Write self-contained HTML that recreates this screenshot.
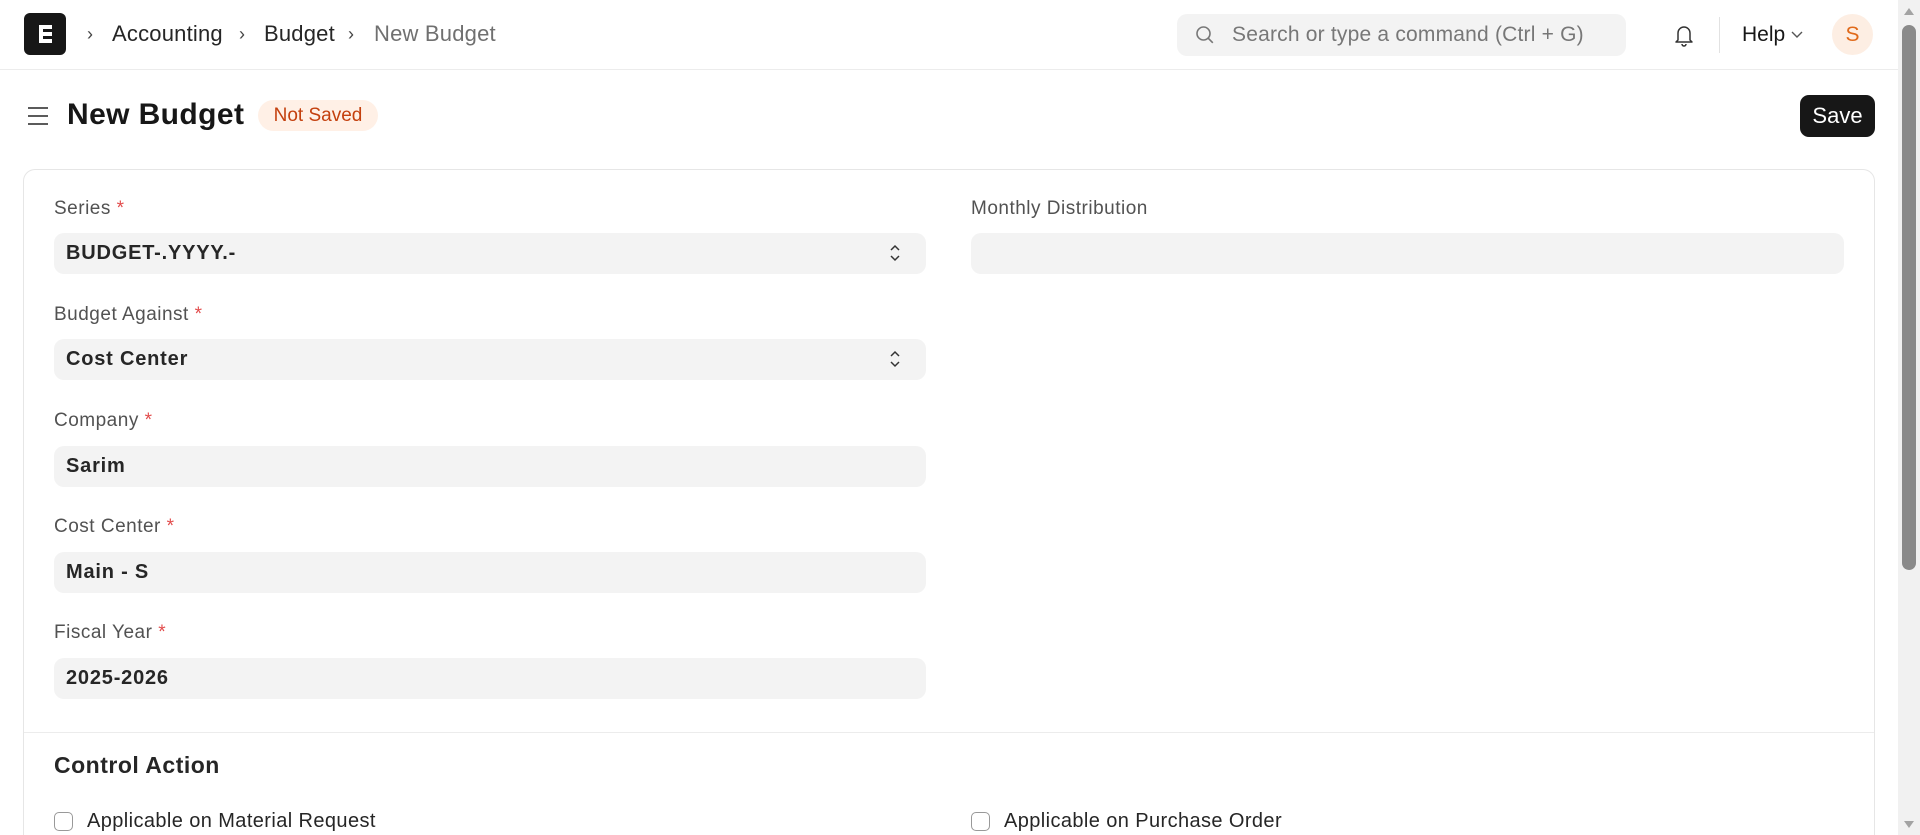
<!DOCTYPE html>
<html style="overflow:hidden;height:835px"><head><meta charset="utf-8"><style>
*{box-sizing:border-box;margin:0;padding:0}
body{width:1920px;height:835px;overflow:hidden;background:#fff;font-family:"Liberation Sans",sans-serif;color:#171717;position:relative}
.a{position:absolute;white-space:nowrap}
.nav{position:absolute;left:0;top:0;width:1898px;height:70px;border-bottom:1px solid #ececec;background:#fff}
.crumb{font-size:22px;color:#262626;top:21px;letter-spacing:0.2px}
.chev{font-size:18px;color:#444;top:24px}
.lbl{font-size:19px;color:#525252;letter-spacing:0.5px}
.req{color:#e24c4c}
.inp{position:absolute;height:41px;background:#f3f3f3;border-radius:10px;font-size:20px;letter-spacing:0.8px;font-weight:bold;padding-left:12px;line-height:41px;color:#262626}
.cb{position:absolute;width:19px;height:19px;border:1.5px solid #999;border-radius:5px;background:#fff}
</style></head><body>
<div class="nav"></div>
<div class="a" style="left:24px;top:13px;width:42px;height:42px;background:#171717;border-radius:6px"></div>
<svg class="a" style="left:24px;top:13px" width="42" height="42" viewBox="0 0 42 42"><path d="M15 12h13v4H19v3h9v4h-9v3h9v4H15z" fill="#fff"/></svg>
<div class="a chev" style="left:87px">&#8250;</div>
<div class="a crumb" style="left:112px">Accounting</div>
<div class="a chev" style="left:239px">&#8250;</div>
<div class="a crumb" style="left:264px">Budget</div>
<div class="a chev" style="left:348px">&#8250;</div>
<div class="a crumb" style="left:374px;color:#707070">New Budget</div>
<div class="a" style="left:1177px;top:14px;width:449px;height:42px;background:#f3f3f3;border-radius:10px"></div>
<svg class="a" style="left:1195px;top:25px" width="20" height="20" viewBox="0 0 20 20"><circle cx="8.5" cy="8.5" r="6.5" fill="none" stroke="#777" stroke-width="1.6"/><path d="M13.3 13.3l4.5 4.5" stroke="#777" stroke-width="1.6"/></svg>
<div class="a" style="left:1232px;top:23px;font-size:21px;color:#777;letter-spacing:0.2px">Search or type a command (Ctrl + G)</div>
<svg class="a" style="left:1672px;top:22px" width="24" height="26" viewBox="0 0 24 26"><path d="M6 18V11a6 6 0 0 1 12 0v7l2 2H4z" fill="none" stroke="#333" stroke-width="1.5" stroke-linejoin="round"/><path d="M10 22a2 2 0 0 0 4 0" fill="none" stroke="#333" stroke-width="1.5"/></svg>
<div class="a" style="left:1719px;top:17px;width:1px;height:36px;background:#e2e2e2"></div>
<div class="a" style="left:1742px;top:23px;font-size:21px;color:#171717">Help</div>
<svg class="a" style="left:1791px;top:31px" width="12" height="8" viewBox="0 0 12 8"><path d="M1 1l5 5 5-5" fill="none" stroke="#555" stroke-width="1.4"/></svg>
<div class="a" style="left:1832px;top:14px;width:41px;height:41px;border-radius:50%;background:#fdeee3;color:#e06a1b;font-size:21px;text-align:center;line-height:41px">S</div>
<div class="a" style="left:1898px;top:0;width:22px;height:835px;background:#f1f1f1"></div>
<div class="a" style="left:1902px;top:25px;width:14px;height:545px;background:#8a8a8a;border-radius:7px"></div>
<svg class="a" style="left:1903px;top:6px" width="12" height="10"><path d="M1 9L6 2l5 7z" fill="#a3a3a3"/></svg>
<svg class="a" style="left:1903px;top:820px" width="12" height="10"><path d="M1 1l5 7 5-7z" fill="#a3a3a3"/></svg>

<svg class="a" style="left:27px;top:105px" width="22" height="22" viewBox="0 0 22 22"><path d="M1 3h20M1 11h20M1 19h20" stroke="#444" stroke-width="1.8"/></svg>
<div class="a" style="left:67px;top:98px;font-size:30px;letter-spacing:0.4px;font-weight:bold;color:#171717">New Budget</div>
<div class="a" style="left:258px;top:100px;width:120px;height:31px;border-radius:16px;background:#fff0e6;color:#c4400e;font-size:19px;text-align:center;line-height:31px">Not Saved</div>
<div class="a" style="left:1800px;top:95px;width:75px;height:42px;border-radius:9px;background:#171717;color:#fff;font-size:22px;text-align:center;line-height:42px">Save</div>

<div class="a" style="left:23px;top:169px;width:1852px;height:666px;border:1px solid #e6e6e6;border-bottom:none;border-radius:12px 12px 0 0"></div>
<div class="a" style="left:24px;top:732px;width:1850px;height:1px;background:#ececec"></div>

<div class="a lbl" style="left:54px;top:198px">Series <span class="req">*</span></div>
<div class="inp" style="left:54px;top:233px;width:872px">BUDGET-.YYYY.-</div>
<div class="a lbl" style="left:54px;top:304px">Budget Against <span class="req">*</span></div>
<div class="inp" style="left:54px;top:339px;width:872px">Cost Center</div>
<div class="a lbl" style="left:54px;top:410px">Company <span class="req">*</span></div>
<div class="inp" style="left:54px;top:446px;width:872px">Sarim</div>
<div class="a lbl" style="left:54px;top:516px">Cost Center <span class="req">*</span></div>
<div class="inp" style="left:54px;top:552px;width:872px">Main - S</div>
<div class="a lbl" style="left:54px;top:622px">Fiscal Year <span class="req">*</span></div>
<div class="inp" style="left:54px;top:658px;width:872px">2025-2026</div>
<svg class="a" style="left:889px;top:243px" width="12" height="20" viewBox="0 0 12 20"><path d="M2 7l4-4 4 4M2 13l4 4 4-4" fill="none" stroke="#333" stroke-width="1.5"/></svg>
<svg class="a" style="left:889px;top:349px" width="12" height="20" viewBox="0 0 12 20"><path d="M2 7l4-4 4 4M2 13l4 4 4-4" fill="none" stroke="#333" stroke-width="1.5"/></svg>

<div class="a lbl" style="left:971px;top:198px">Monthly Distribution</div>
<div class="inp" style="left:971px;top:233px;width:873px"></div>

<div class="a" style="left:54px;top:752px;font-size:23px;letter-spacing:0.5px;font-weight:bold;color:#262626">Control Action</div>
<div class="cb" style="left:54px;top:812px"></div>
<div class="a" style="left:87px;top:810px;font-size:20px;letter-spacing:0.4px;color:#262626">Applicable on Material Request</div>
<div class="cb" style="left:971px;top:812px"></div>
<div class="a" style="left:1004px;top:810px;font-size:20px;letter-spacing:0.4px;color:#262626">Applicable on Purchase Order</div>
</body></html>
